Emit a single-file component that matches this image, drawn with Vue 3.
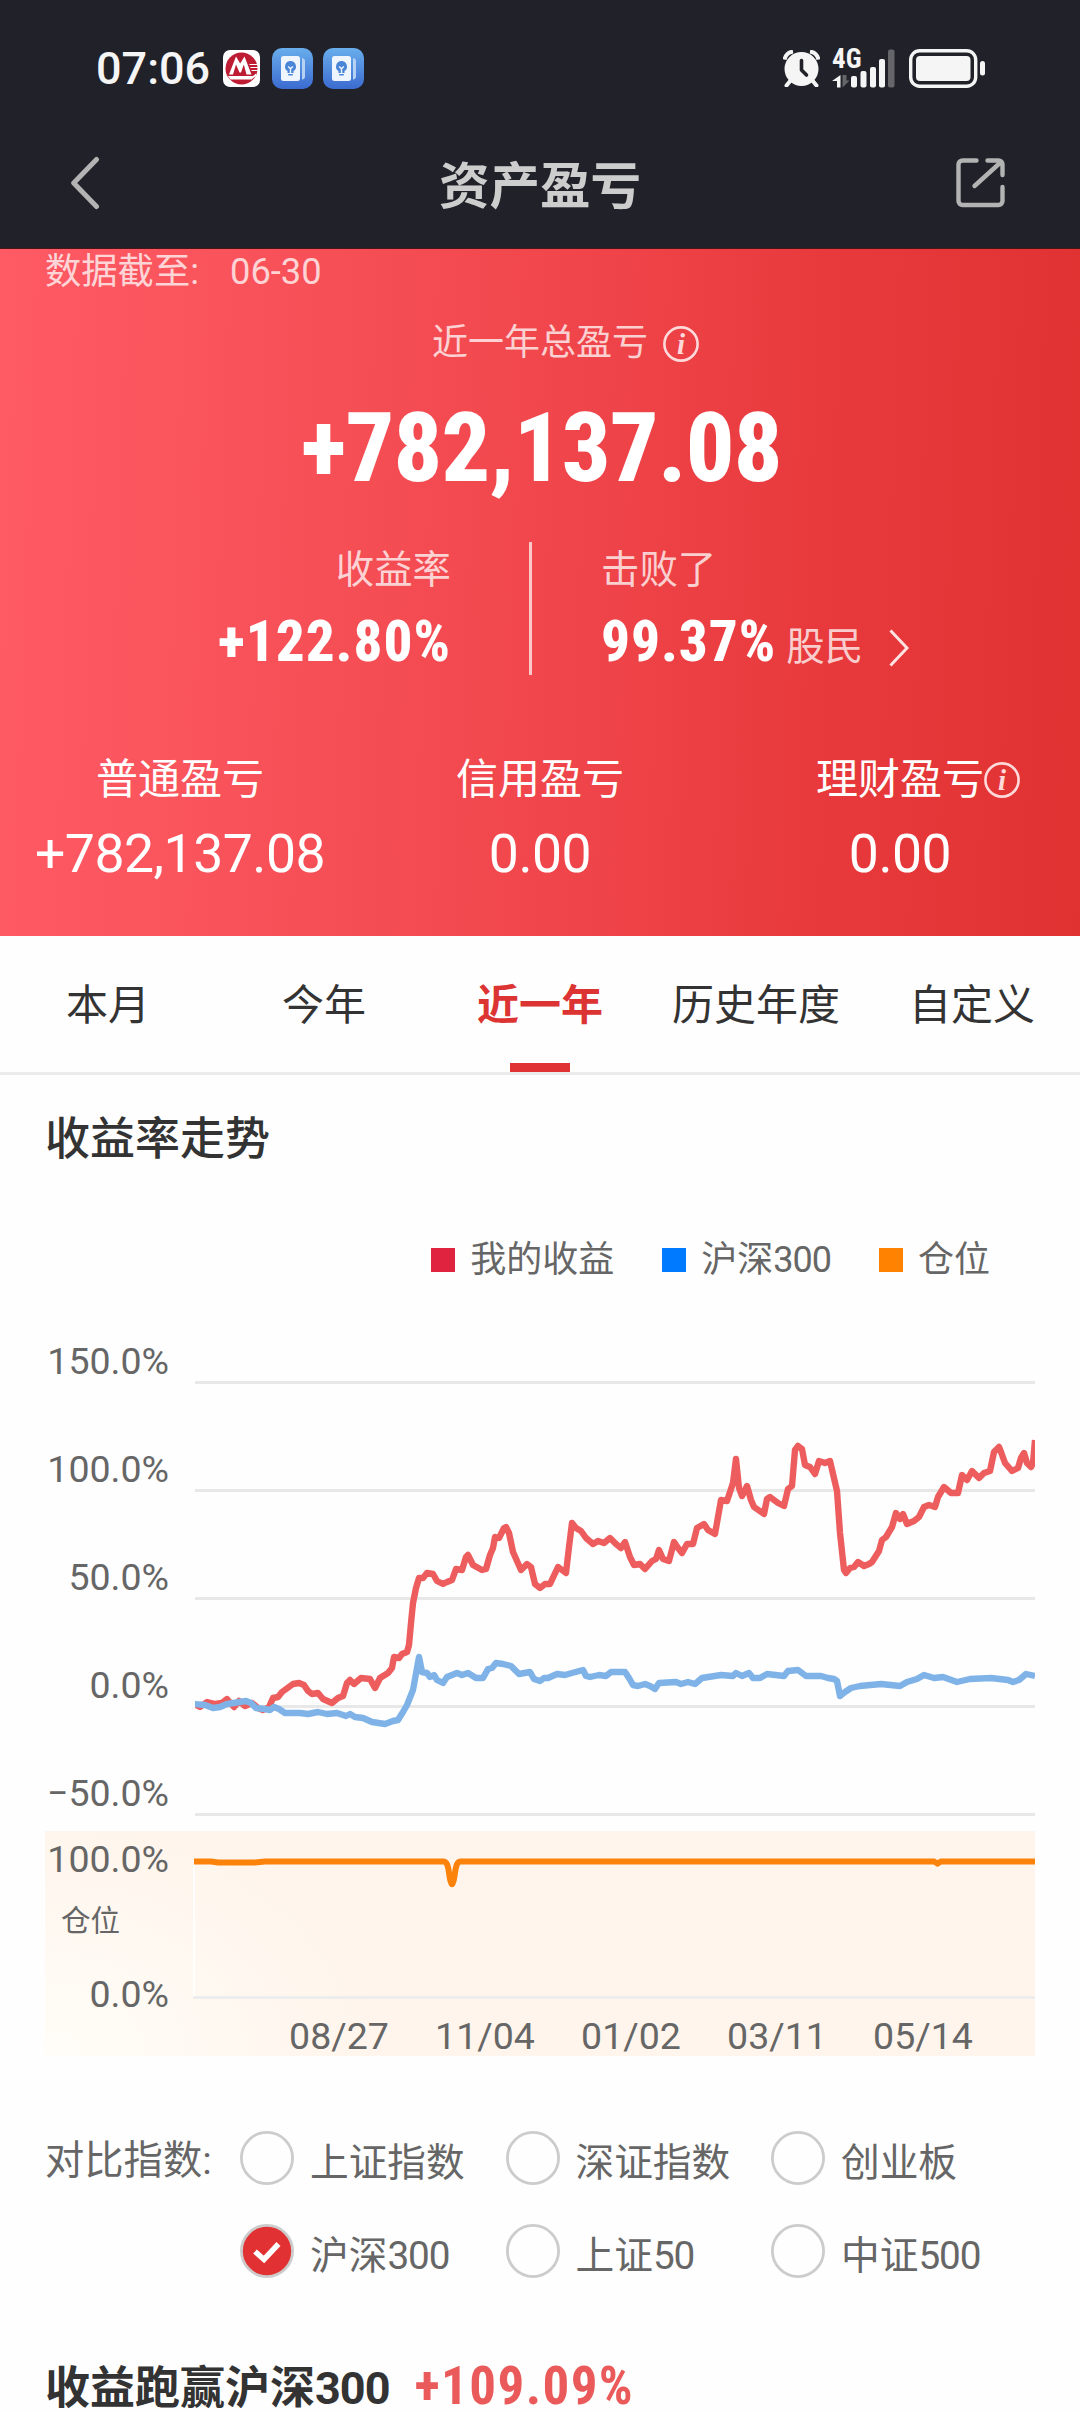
<template>
  <div class="page">
    <!-- 顶部：状态栏 + 导航栏 -->
    <header class="header">
      <div class="status-bar">
        <span class="time">07:06</span>
        <svg class="app-icon bank" viewBox="0 0 37 37">
          <rect width="37" height="37" rx="7" fill="#fff" />
          <circle cx="18.5" cy="18.5" r="16" fill="#bd1c32" />
          <path d="M6 24.500L13 6.500L17.200 13.500L21.500 6.500L28.500 24.500H23.500L20.800 14.500L18 22.500H16.500L13 14.500L10 24.500Z" fill="#fff" />
          <path d="M26.500 14.500H35M27.500 17.500H35M28.500 20.500H35" stroke="#fff" stroke-width="1.200" />
          <path d="M5 26H30L33 23.500V26L28.500 29.500H7.500Z" fill="#fff" />
        </svg>
        <svg v-for="n in 2" :key="n" class="app-icon note" viewBox="0 0 41 41">
          <defs>
            <linearGradient :id="'note' + n" x1="0" y1="0" x2="0" y2="1">
              <stop offset="0" stop-color="#69aeec" />
              <stop offset="1" stop-color="#3b6bd0" />
            </linearGradient>
          </defs>
          <rect width="41" height="41" rx="10" :fill="'url(#note' + n + ')'" />
          <rect x="9" y="8" width="19" height="25" rx="2.500" fill="#eef5fd" />
          <path d="M30 10Q33 10.500 33 13V28.500Q33 31 30 31.500Z" fill="#b5d2f5" />
          <path d="M18.500 13a5.500 5.500 0 0 1 3 10.100V25h-6v-1.900a5.500 5.500 0 0 1 3-10.100Z" fill="#4a86d8" />
          <path d="M16.200 18.500l2.300 2.300l2.300-2.300M18.500 20.800V25" fill="none" stroke="#eef5fd" stroke-width="1.400" />
          <rect x="16" y="26" width="5" height="1.600" rx=".8" fill="#4a86d8" />
        </svg>
        <div class="status-right">
          <svg class="alarm" viewBox="0 0 37 37">
            <circle cx="18.500" cy="19" r="17" fill="#f5f5f5" />
            <path d="M1.500 9.500A10.500 10.500 0 0 1 10 1.500M27 1.500A10.500 10.500 0 0 1 35.500 9.500" fill="none" stroke="#f5f5f5" stroke-width="4" />
            <path d="M8 30L3.500 35.500M29 30L33.500 35.500" stroke="#f5f5f5" stroke-width="4" stroke-linecap="round" />
            <path d="M18.500 10.500V20L23.500 25" fill="none" stroke="#212129" stroke-width="3.600" stroke-linecap="round" stroke-linejoin="round" />
          </svg>
          <div class="signal">
            <span class="net">4G</span>
            <svg viewBox="0 0 63 39">
              <path d="M8.500 26V38.500H5V32H0Z" fill="#f5f5f5" />
              <path d="M10.500 26V38.500L17.500 31.500H14.500V26Z" fill="#65656a" />
              <rect x="19" y="27" width="6" height="11.500" rx="2" fill="#f5f5f5" />
              <rect x="28.500" y="22" width="6" height="16.500" rx="2" fill="#f5f5f5" />
              <rect x="38" y="18" width="6" height="20.500" rx="2" fill="#f5f5f5" />
              <rect x="47" y="10" width="6" height="28.500" rx="2" fill="#f5f5f5" />
              <rect x="56" y=".500" width="6.500" height="38" rx="2" fill="#65656a" />
            </svg>
          </div>
          <svg class="battery" viewBox="0 0 76 39">
            <rect x="1.700" y="1.700" width="65" height="35.600" rx="9" fill="none" stroke="#f5f5f5" stroke-width="3.400" />
            <rect x="7" y="7" width="54.500" height="25" rx="4" fill="#f5f5f5" />
            <rect x="71" y="12" width="5" height="14.500" rx="2.500" fill="#f5f5f5" />
          </svg>
        </div>
      </div>
      <div class="nav-bar">
        <svg class="back" viewBox="0 0 30 54">
          <path d="M26.500 3.500L3.700 27L26.500 50.500" />
        </svg>
        <h1>资产盈亏</h1>
        <svg class="share" viewBox="0 0 50 50">
          <path d="M20.500 2.500H6.500a4 4 0 0 0-4 4V43a4 4 0 0 0 4 4H42.500a4 4 0 0 0 4-4V29M31.500 2.500H42.500a4 4 0 0 1 4 4V17M45 4L18.500 28" />
        </svg>
      </div>
    </header>

    <!-- 盈亏总览 -->
    <section class="summary">
      <p class="deadline">数据截至:<span class="num">06-30</span></p>
      <div class="total-label">
        近一年总盈亏
        <svg class="info" viewBox="0 0 36 36">
          <circle cx="18" cy="18" r="16.600" />
          <text x="18" y="27.500">i</text>
        </svg>
      </div>
      <div class="total"><span class="num">+782,137.08</span></div>
      <div class="rates">
        <div class="rate left">
          <span class="label">收益率</span>
          <span class="num">+122.80%</span>
        </div>
        <i class="divider"></i>
        <div class="rate">
          <span class="label">击败了</span>
          <div class="beat">
            <span class="num">99.37%</span>
            <span class="label">股民</span>
            <svg viewBox="0 0 20 38"><path d="M1.500 1.500L18 19L1.500 36.500" /></svg>
          </div>
        </div>
      </div>
      <div class="accounts">
        <div v-for="item in accounts" :key="item.name" class="account">
          <span class="name">
            {{ item.name }}
            <svg v-if="item.info" class="info" viewBox="0 0 36 36">
              <circle cx="18" cy="18" r="16.600" />
              <text x="18" y="27.500">i</text>
            </svg>
          </span>
          <span class="num">{{ item.value }}</span>
        </div>
      </div>
    </section>

    <!-- 时间区间切换 -->
    <nav class="tabs">
      <span v-for="tab in tabs" :key="tab" class="tab" :class="{ active: tab === '近一年' }">{{ tab }}</span>
    </nav>

    <!-- 收益率走势 -->
    <section class="trend">
      <h2>收益率走势</h2>
      <div class="legend">
        <span v-for="item in legend" :key="item.type" class="legend-item" :class="item.type">
          <span>{{ item.name }}<span class="code">{{ item.code }}</span></span>
        </span>
      </div>
      <div class="chart">
        <div class="axis">
          <span v-for="label in yLabels" :key="label">{{ label }}</span>
        </div>
        <svg class="plot" viewBox="195 1352 840 476">
          <path v-for="y in gridLines" :key="y" class="grid" :d="'M195 ' + y + 'H1035'" />
          <polyline class="mine" :points="myReturn" />
          <polyline class="index" :points="hs300" />
        </svg>
      </div>
      <div class="position">
        <div class="position-axis">
          <span>100.0%</span>
          <span class="position-name">仓位</span>
          <span>0.0%</span>
        </div>
        <div class="position-main">
          <svg viewBox="0 0 842 170">
            <path d="M1 33V165" stroke="#fff" stroke-width="2" />
            <path d="M0 166.500H842" stroke="#ededed" stroke-width="3" />
            <path class="position-line" d="M1 30.500H18L25 31.500H62L72 30.500H250C254 30.500 255 34 256.500 45C258 56 260 56 261.500 45C263 34 264 30.500 268 30.500H741L744.500 32.500L748 30.500H842" />
          </svg>
          <div class="dates">
            <span v-for="d in dates" :key="d">{{ d }}</span>
          </div>
        </div>
      </div>
    </section>

    <!-- 对比指数 -->
    <section class="compare">
      <span class="compare-title">对比指数:</span>
      <div class="options">
        <label v-for="item in indexes" :key="item.name + item.code" class="option">
          <svg viewBox="0 0 54 54">
            <circle cx="27" cy="27" r="25.600" :class="{ checked: item.checked }" />
            <path v-if="item.checked" d="M15 27.500L24 35.500L38.500 20" />
          </svg>
          <span>{{ item.name }}<span class="code">{{ item.code }}</span></span>
        </label>
      </div>
    </section>

    <div class="result">
      <span>收益跑赢沪深<span class="code">300</span></span>
      <span class="num">+109.09%</span>
    </div>
  </div>
</template>

<script setup>
const accounts = [
  { name: '普通盈亏', value: '+782,137.08' },
  { name: '信用盈亏', value: '0.00' },
  { name: '理财盈亏', value: '0.00', info: true },
]

const tabs = ['本月', '今年', '近一年', '历史年度', '自定义']

const legend = [
  { name: '我的收益', code: '', type: 'red' },
  { name: '沪深', code: '300', type: 'blue' },
  { name: '仓位', code: '', type: 'orange' },
]

const yLabels = ['150.0%', '100.0%', '50.0%', '0.0%', '−50.0%']
const gridLines = [1382.5, 1490.5, 1598.5, 1706.5, 1814.5]
const dates = ['08/27', '11/04', '01/02', '03/11', '05/14']

const indexes = [
  { name: '上证指数', code: '' },
  { name: '深证指数', code: '' },
  { name: '创业板', code: '' },
  { name: '沪深', code: '300', checked: true },
  { name: '上证', code: '50' },
  { name: '中证', code: '500' },
]

// 我的收益曲线
const myReturn =
  '194,1704 200,1707 207,1702 215,1704 222,1703 227,1699 234,1707 239,1701 245,1706 252,1703 258,1708 263,1710 269,1707 273,1698 ' +
  '278,1697 282,1692 293,1684 299,1683 304,1685 308,1691 312,1694 318,1693 323,1699 332,1703 338,1698 343,1696 347,1683 350,1680 ' +
  '354,1684 361,1678 370,1679 375,1688 380,1678 388,1673 392,1668 394,1657 399,1658 402,1654 407,1652 409,1645 411,1623 413,1603 ' +
  '416,1588 419,1578 423,1578 427,1573 433,1574 437,1581 443,1584 447,1582 452,1580 456,1569 462,1570 466,1557 468,1555 473,1565 ' +
  '482,1570 486,1569 490,1555 493,1548 495,1537 499,1538 504,1528 506,1527 509,1533 513,1552 521,1570 527,1564 531,1567 535,1584 ' +
  '540,1588 545,1584 550,1584 558,1567 566,1573 569,1547 572,1523 576,1528 581,1531 586,1538 593,1544 598,1541 604,1543 610,1538 ' +
  '616,1544 621,1548 625,1542 630,1557 634,1565 640,1564 645,1569 652,1561 656,1559 659,1550 663,1559 669,1561 674,1542 678,1548 ' +
  '682,1553 687,1544 693,1544 697,1528 704,1524 708,1530 715,1534 721,1500 727,1501 730,1492 733,1483 736,1459 739,1488 742,1496 ' +
  '747,1486 751,1500 754,1507 764,1514 767,1499 770,1497 778,1503 784,1506 788,1489 792,1486 795,1450 798,1446 802,1449 805,1465 ' +
  '810,1467 815,1474 819,1461 825,1463 830,1461 837,1491 840,1533 844,1570 846,1573 850,1568 854,1567 858,1562 864,1566 869,1564 ' +
  '872,1562 879,1551 882,1540 886,1537 892,1527 896,1513 900,1519 903,1514 907,1524 914,1521 919,1517 924,1507 929,1505 935,1507 ' +
  '938,1497 944,1487 951,1493 958,1493 962,1475 967,1480 972,1471 979,1478 984,1473 990,1471 994,1452 999,1447 1001,1452 1005,1463 ' +
  '1012,1471 1018,1468 1021,1458 1024,1453 1027,1463 1031,1467 1033,1463 1035,1440'

// 沪深300曲线
const hs300 =
  '194,1704 205,1705 213,1708 220,1707 227,1704 246,1701 251,1703 256,1708 265,1709 270,1710 274,1707 279,1709 285,1713 300,1713 ' +
  '308,1714 318,1712 327,1714 337,1713 346,1716 350,1714 355,1717 363,1718 372,1722 385,1724 393,1721 398,1720 403,1712 407,1705 ' +
  '413,1690 417,1668 419,1657 422,1672 427,1673 430,1677 434,1675 437,1680 443,1683 447,1677 457,1673 462,1675 468,1673 476,1678 ' +
  '483,1678 488,1669 492,1668 496,1663 503,1664 511,1666 519,1674 530,1672 534,1679 540,1681 544,1678 548,1678 557,1674 565,1675 ' +
  '572,1673 583,1670 586,1676 590,1677 599,1675 606,1676 611,1672 625,1672 629,1678 633,1685 638,1686 645,1684 650,1686 655,1689 ' +
  '659,1683 676,1682 681,1684 688,1682 695,1684 702,1678 721,1675 733,1676 736,1673 742,1676 749,1673 753,1678 760,1678 767,1674 ' +
  '784,1676 788,1671 798,1670 806,1676 821,1676 828,1678 834,1679 837,1681 840,1696 845,1692 851,1688 860,1686 881,1684 900,1686 ' +
  '907,1682 917,1679 924,1675 934,1678 943,1677 957,1682 970,1679 991,1678 1008,1680 1013,1682 1019,1680 1026,1674 1035,1676'
</script>

<style>
body {
  background: #fefefe;
}
</style>

<style scoped>
.page {
  width: 1080px;
  height: 2412px;
  overflow: hidden;
  font-family: Roboto, 'Noto Sans CJK SC', sans-serif;
  color: #333;
  background: #fefefe;
}

.page * {
  box-sizing: border-box;
}

svg {
  display: block;
  flex: none;
}

h1,
h2,
p {
  margin: 0;
}

.num {
  white-space: nowrap;
}

.code {
  letter-spacing: -1px;
}

/* 顶部 */
.header {
  height: 249px;
  background: #212129;
  border-bottom: 1px solid #4a1519;
}

.status-bar {
  display: flex;
  align-items: center;
  height: 136px;
  padding: 0 95px 0 96px;
}

.time {
  width: 127px;
  font-size: 45px;
  font-weight: 500;
  color: #f5f5f5;
}

.bank {
  width: 37px;
  height: 37px;
  margin-right: 12px;
}

.note {
  width: 41px;
  height: 41px;
  margin-right: 10px;
}

.status-right {
  display: flex;
  align-items: center;
  margin-left: auto;
}

.alarm {
  width: 37px;
  height: 37px;
  margin-right: 12px;
}

.signal {
  position: relative;
  width: 63px;
  height: 39px;
  margin-right: 14px;
}

.net {
  position: absolute;
  top: -1px;
  left: 0;
  font-size: 27px;
  line-height: 22px;
  font-weight: 700;
  font-stretch: 75%;
  color: #f5f5f5;
}

.battery {
  width: 76px;
  height: 39px;
}

.nav-bar {
  display: flex;
  align-items: center;
  height: 94px;
  padding: 0 74px 0 70px;
}

.nav-bar h1 {
  flex: 1;
  padding: 7px 0 0 24px;
  font-size: 50.5px;
  line-height: 87px;
  font-weight: 700;
  text-align: center;
  color: #cdcdcd;
}

.back,
.share {
  fill: none;
  stroke: #b3b3b3;
  stroke-width: 5;
  stroke-linecap: round;
  stroke-linejoin: round;
}

.back {
  width: 30px;
  height: 54px;
}

.share {
  width: 50px;
  height: 50px;
  stroke-width: 4.4;
}

/* 总览 */
.summary {
  height: 687px;
  background: linear-gradient(92deg, #ff5b65 0%, #f2494f 45%, #e83a3d 75%, #e13232 100%);
  color: #fff;
}

.deadline {
  height: 46px;
  padding-left: 45px;
  font-size: 36.3px;
  line-height: 46px;
  color: rgba(255, 255, 255, 0.75);
}

.deadline .num {
  margin-left: 31px;
}

.total-label {
  display: flex;
  align-items: center;
  justify-content: center;
  height: 50px;
  margin-top: 23px;
  font-size: 36px;
  line-height: 50px;
  color: rgba(255, 255, 255, 0.75);
}

.info {
  width: 36px;
  height: 36px;
  fill: none;
  stroke: #ffd9da;
  stroke-width: 2.6;
}

.info text {
  font: italic bold 29px 'Liberation Serif', serif;
  text-anchor: middle;
  fill: #ffd9da;
  stroke: none;
}

.total-label .info {
  margin: 1px -51px 0 15px;
}

.total {
  height: 110px;
  margin-top: 25px;
  padding-left: 3px;
  font-size: 96px;
  line-height: 110px;
  font-weight: 800;
  font-stretch: 75%;
  letter-spacing: -0.7px;
  text-align: center;
}

.rates {
  display: flex;
  height: 134px;
  margin-top: 39px;
}

.rate {
  display: flex;
  flex-direction: column;
  width: 451px;
  padding-top: 2px;
  font-size: 57px;
  line-height: 66px;
  font-weight: 800;
  font-stretch: 75%;
}

.rate.left {
  align-items: flex-end;
}

.label {
  font-size: 38.4px;
  line-height: 52px;
  font-weight: 400;
  color: rgba(255, 255, 255, 0.75);
}

.rate .num {
  margin-top: 13px;
  letter-spacing: 1px;
}

.divider {
  width: 3px;
  height: 133px;
  margin: 0 69px 0 78px;
  background: rgba(255, 255, 255, 0.7);
}

.beat {
  display: flex;
  align-items: center;
}

.beat .label {
  margin: 23px 26px 0 10px;
}

.beat svg {
  width: 20px;
  height: 38px;
  margin-top: 24px;
  fill: none;
  stroke: #ffe3e3;
  stroke-width: 3;
}

.accounts {
  display: grid;
  grid-template-columns: repeat(3, 1fr);
  margin-top: 76px;
}

.account {
  display: flex;
  flex-direction: column;
  align-items: center;
  font-size: 53.5px;
  line-height: 64px;
}

.account .name {
  display: flex;
  align-items: center;
  height: 56px;
  font-size: 42px;
  line-height: 56px;
}

.account .info {
  margin-right: -36px;
}

.account .num {
  margin-top: 14px;
  letter-spacing: -0.5px;
}

/* 切换栏 */
.tabs {
  display: grid;
  grid-template-columns: repeat(5, 1fr);
  height: 139px;
  border-bottom: 3px solid #ebebeb;
}

.tab {
  position: relative;
  font-size: 42px;
  line-height: 139px;
  text-align: center;
}

.tab.active {
  font-weight: 700;
  color: #dc3433;
}

.tab.active::after {
  content: '';
  position: absolute;
  left: 78px;
  top: 127px;
  width: 60px;
  height: 9px;
  background: #e03232;
}

/* 走势图 */
.trend {
  padding: 35px 45px 0;
}

.trend h2 {
  font-size: 45px;
  line-height: 60px;
  font-weight: 500;
}

.legend {
  display: flex;
  justify-content: flex-end;
  gap: 48px;
  margin-top: 65px;
  padding-right: 45px;
}

.legend-item {
  display: flex;
  align-items: center;
  font-size: 36px;
  line-height: 50px;
  color: #666;
}

.legend-item::before {
  content: '';
  width: 24px;
  height: 24px;
  margin-right: 15px;
}

.red::before {
  background: #e0233e;
}

.blue::before {
  background: #007aff;
}

.orange::before {
  background: #ff8200;
}

.chart {
  display: flex;
  height: 476px;
  margin-top: 67px;
}

.axis {
  width: 150px;
  padding-right: 26px;
  font-size: 37.5px;
  color: #666;
  text-align: right;
}

.axis span {
  display: block;
  height: 108px;
  line-height: 18px;
}

.plot {
  width: 840px;
  height: 476px;
}

.grid {
  stroke: #e8e8e8;
  stroke-width: 3;
}

.mine,
.index {
  fill: none;
  stroke-width: 6.4;
  stroke-linejoin: round;
}

.mine {
  stroke: #ed5d5d;
}

.index {
  stroke: #7fb3e8;
}

/* 仓位 */
.position {
  display: flex;
  height: 225px;
  margin-top: 3px;
  background: radial-gradient(ellipse 330px 240px at 0 100%, #fffdf8 0%, #fff5ec 100%);
}

.position-axis {
  display: flex;
  flex-direction: column;
  width: 148px;
  padding: 3px 24px 0 0;
  font-size: 37.5px;
  line-height: 50px;
  color: #666;
  text-align: right;
}

.position-name {
  margin: 12px 0 23px;
  padding-left: 16px;
  font-size: 29.5px;
  text-align: left;
}

.position-main svg {
  width: 842px;
  height: 170px;
}

.position-line {
  fill: none;
  stroke: #fb830b;
  stroke-width: 6;
}

.dates {
  display: grid;
  grid-template-columns: repeat(5, 146px);
  padding-left: 73px;
  font-size: 37.5px;
  line-height: 70px;
  color: #666;
  text-align: center;
}

/* 对比指数 */
.compare {
  display: flex;
  margin-top: 75px;
  padding-left: 45px;
  font-size: 38.7px;
  color: #666;
}

.compare-title {
  width: 195px;
  line-height: 61px;
  font-size: 39.3px;
}

.options {
  display: grid;
  grid-template-columns: repeat(3, 265.5px);
  row-gap: 39px;
}

.option {
  display: flex;
  height: 54px;
  line-height: 64px;
}

.option svg {
  width: 54px;
  height: 54px;
  margin-right: 16px;
  fill: none;
  stroke: #ccc;
  stroke-width: 2.8;
}

.option .checked {
  fill: #e23132;
}

.option path {
  stroke: #fff;
  stroke-width: 5.5;
}

/* 跑赢结果 */
.result {
  display: flex;
  align-items: baseline;
  margin-top: 83px;
  padding-left: 45px;
  font-size: 45px;
  line-height: 50px;
  font-weight: 700;
  white-space: nowrap;
}

.result .num {
  margin-left: 25px;
  font-size: 53px;
  font-stretch: 75%;
  letter-spacing: 1.4px;
  color: #ea5a5a;
}
</style>
